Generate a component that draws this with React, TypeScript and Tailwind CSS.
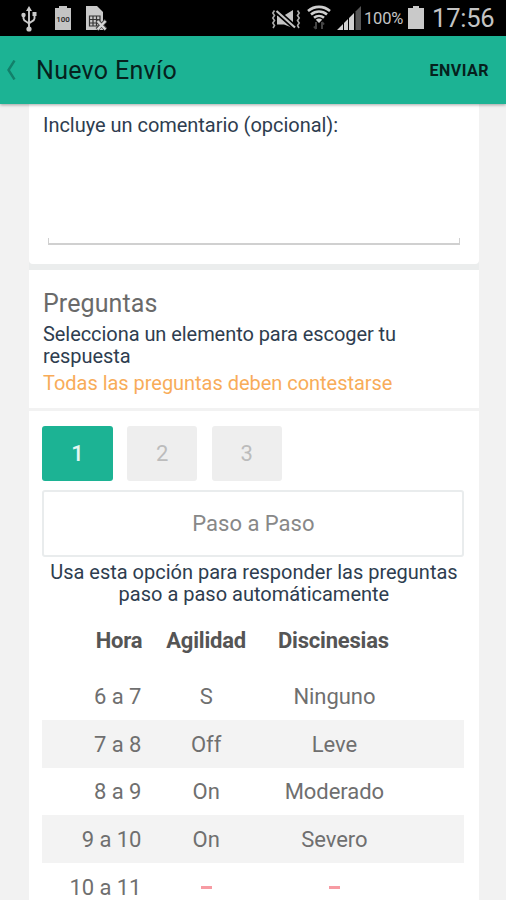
import clsx from "clsx";

const rows = [
  { hour: "6 a 7", agility: "S", dyskinesia: "Ninguno" },
  { hour: "7 a 8", agility: "Off", dyskinesia: "Leve" },
  { hour: "8 a 9", agility: "On", dyskinesia: "Moderado" },
  { hour: "9 a 10", agility: "On", dyskinesia: "Severo" },
  { hour: "10 a 11", agility: "", dyskinesia: "" },
];

const UsbIcon = () => (
  <svg width="16" height="26" viewBox="0 0 16 26" fill="none" stroke="#c9c9c9" strokeWidth="1.9">
    <path d="M8 4v20M2.500 9v3.500c0 3 5.500 3.500 5.500 6M13.500 8v4.500c0 3-5.500 3-5.500 5.500" />
    <path d="M8 0L11 5H5z" fill="#c9c9c9" stroke="none" />
    <circle cx="2.500" cy="9" r="2.200" fill="#c9c9c9" stroke="none" />
    <path d="M11.500 6h4v4h-4z" fill="#c9c9c9" stroke="none" />
    <circle cx="8" cy="23" r="2.600" fill="#c9c9c9" stroke="none" />
  </svg>
);

const BatteryFullIcon = () => (
  <span className="relative flex h-6 w-4">
    <svg width="16" height="24" viewBox="0 0 16 24" fill="#c4c4c4">
      <path d="M4 0h8v2h4v22H0V2h4z" />
    </svg>
    <span className="absolute inset-x-0 top-[9px] text-center text-[8px] leading-[9px] font-medium text-[#222]">
      100
    </span>
  </span>
);

const SimErrorIcon = () => (
  <svg width="21" height="25" viewBox="0 0 21 25">
    <path d="M0 0h11l6 6v18H0z" fill="#c9c9c9" />
    <path d="M3.500 10h10.500v10H3.500zM7 10v10M10.500 10v10M3.500 13.500H14M3.500 17H14" fill="none" stroke="#333" strokeWidth="1.200" />
    <path d="M11 14.500l9 9M20 14.500l-9 9" stroke="#444" strokeWidth="4" />
    <path d="M11.500 15l8 8.500M19.500 15l-8 8.500" stroke="#d6d6d6" strokeWidth="2.400" />
  </svg>
);

const VibrateMuteIcon = () => (
  <svg width="30" height="20" viewBox="0 0 30 20" fill="none" stroke="#aaa" strokeWidth="1.600">
    <path d="M3.500 1.500L1.800 4l1.700 2.500L1.800 9l1.700 2.500L1.800 14l1.700 2.500L2 19" />
    <path d="M26.500 1.500L28.200 4l-1.700 2.500L28.200 9l-1.700 2.500 1.700 2.500-1.700 2.500L28 19" />
    <path d="M6 6.500h7l9-5.500v18L13 15.500H6z" fill="#c4c4c4" stroke="none" />
    <path d="M6 2.500l18 16" stroke="#000" strokeWidth="5.500" />
    <path d="M5.500 2L24 18.500" stroke="#c4c4c4" strokeWidth="2.200" />
  </svg>
);

const WifiIcon = () => (
  <svg width="24" height="26" viewBox="0 0 24 26" fill="none" stroke="#cfcfcf">
    <path d="M1 6c6.500-5.500 15.500-5.500 22 0M4 9.500c4.700-4 11.300-4 16 0M7 12.800c2.900-2.400 7.100-2.400 10 0" strokeWidth="2.600" />
    <path d="M8.800 14.800c1.900-1.600 4.500-1.600 6.400 0L12 18z" fill="#cfcfcf" stroke="none" />
    <path d="M9 17v7M7 21.500L9 24M15 24v-7M17 19.500L15 17" stroke="#444" strokeWidth="2" />
  </svg>
);

const SignalIcon = () => (
  <svg width="24" height="24" viewBox="0 0 24 24">
    <path d="M0 24l6-6v6zM7 17l4-4v11H7zM12 12l5-5v17h-5z" fill="#d0d0d0" />
    <path d="M18.500 5.500L24 0v24h-5.500z" fill="#555" />
  </svg>
);

const StatusBar = () => (
  <div className="flex h-9 items-start bg-black pt-[6px] text-[#c4c4c4]">
    <div className="ml-[21px] flex gap-[18px]">
      <UsbIcon />
      <BatteryFullIcon />
      <div className="-ml-[3px]">
        <SimErrorIcon />
      </div>
    </div>
    <div className="ml-auto flex items-start pr-[11px]">
      <div className="mt-[3px] mr-[6px]">
        <VibrateMuteIcon />
      </div>
      <div className="-mt-px mr-[6px]">
        <WifiIcon />
      </div>
      <SignalIcon />
      <span className="ml-[3px] w-[44px] pt-[3px] text-[16.500px] leading-5 tracking-[-0.200px] whitespace-nowrap">
        100%
      </span>
      <svg width="16" height="23" viewBox="0 0 16 23" fill="#c9c9c9">
        <path d="M5 0h6v2h5v21H0V2h5z" />
      </svg>
      <span className="ml-2 w-[63px] text-[25.500px] leading-6 tracking-[-0.200px] whitespace-nowrap">17:56</span>
    </div>
  </div>
);

const Header = () => (
  <header className="relative flex h-[67.500px] items-center bg-[#1cb394] pr-[17px] pl-[6px] shadow-[0_1px_3px_rgba(0,0,0,0.35)]">
    <svg width="11" height="20" viewBox="0 0 11 20" fill="none" stroke="#12806a" strokeWidth="2.400">
      <path d="M8.500 0.500L2.500 10l6 9.500" />
    </svg>
    <h1 className="ml-[19px] pt-[3px] text-[25px] leading-8 tracking-[0.300px] text-[#06211d]">Nuevo Envío</h1>
    <button className="ml-auto pt-[2px] text-[16px] font-bold tracking-[0.500px] text-[#06211d]">ENVIAR</button>
  </header>
);

const CommentCard = () => (
  <section className="h-[160.500px] rounded-b bg-white px-[14px] pt-[10px]">
    <label className="block text-[20px] leading-[22px] tracking-[-0.030px] text-[#2e3d4f]">
      Incluye un comentario (opcional):
    </label>
    <div className="mx-[5px] mt-[102px] h-[7px] border-x border-b-2 border-[#d0d0d0]" />
  </section>
);

const QuestionsCard = () => (
  <section className="h-[138px] bg-white px-[14px] pt-[19px]">
    <h2 className="text-[25px] leading-[30px] tracking-[0.100px] text-[#6a6a6a]">Preguntas</h2>
    <p className="mt-1 text-[20px] leading-[22px] tracking-[-0.060px] text-[#2e3d4f]">
      Selecciona un elemento para escoger tu
      <br />
      respuesta
    </p>
    <p className="mt-[5px] text-[20px] leading-[22px] tracking-[-0.030px] text-[#f8ac59]">
      Todas las preguntas deben contestarse
    </p>
  </section>
);

const StepButton = ({ label, active }: { label: string; active?: boolean }) => (
  <button
    className={clsx(
      "h-[55px] w-[70.400px] rounded-[3px] text-[22px]",
      active ? "bg-[#1cb394] font-medium text-[#e4f6f2]" : "bg-[#eeeeee] text-[#bcbcbc]"
    )}
  >
    {label}
  </button>
);

const Cell = ({ value }: { value: string }) => (
  <span className="flex h-full items-center justify-center">
    {value || <span className="h-[3px] w-[11px] bg-[#f79ba3]" />}
  </span>
);

const AnswersTable = () => (
  <div className="text-[22px] text-[#6f6f6f]">
    <div className="grid h-[67px] grid-cols-[100px_127.500px_127px] pt-[22px] leading-[28px] font-bold tracking-[-0.200px] text-[#555]">
      <span className="text-right">Hora</span>
      <span className="text-center">Agilidad</span>
      <span className="text-center">Discinesias</span>
    </div>
    {rows.map((row, i) => (
      <div
        key={row.hour}
        className={clsx(
          "grid h-[47.800px] grid-cols-[99px_129.500px_127px] items-center pt-px tracking-[-0.050px]",
          i % 2 === 1 && "bg-[#f3f3f3]"
        )}
      >
        <span className="text-right">{row.hour}</span>
        <Cell value={row.agility} />
        <Cell value={row.dyskinesia} />
      </div>
    ))}
  </div>
);

const App = () => {
  return (
    <div className="h-[900px] w-[506px] overflow-hidden bg-[#f2f2f2] font-['Roboto',sans-serif]">
      <StatusBar />
      <Header />
      <main className="ml-[29px] w-[450px]">
        <div className="bg-[#ebeded] pb-[6px]">
          <CommentCard />
        </div>
        <QuestionsCard />
        <section className="mt-[3px] bg-white pt-[15px] pr-[14.600px] pl-[13.400px]">
          <div className="flex gap-[14.200px]">
            <StepButton label="1" active />
            <StepButton label="2" />
            <StepButton label="3" />
          </div>
          <button className="mt-[9px] h-[67px] w-full rounded-[3px] border-2 border-[#e9eced] text-[22px] text-[#888]">
            Paso a Paso
          </button>
          <p className="mt-1 -mr-px text-center text-[20px] leading-[22px] text-[#2e3d4f]">
            Usa esta opción para responder las preguntas
            <br />
            paso a paso automáticamente
          </p>
          <AnswersTable />
        </section>
      </main>
    </div>
  );
};

export default App;
